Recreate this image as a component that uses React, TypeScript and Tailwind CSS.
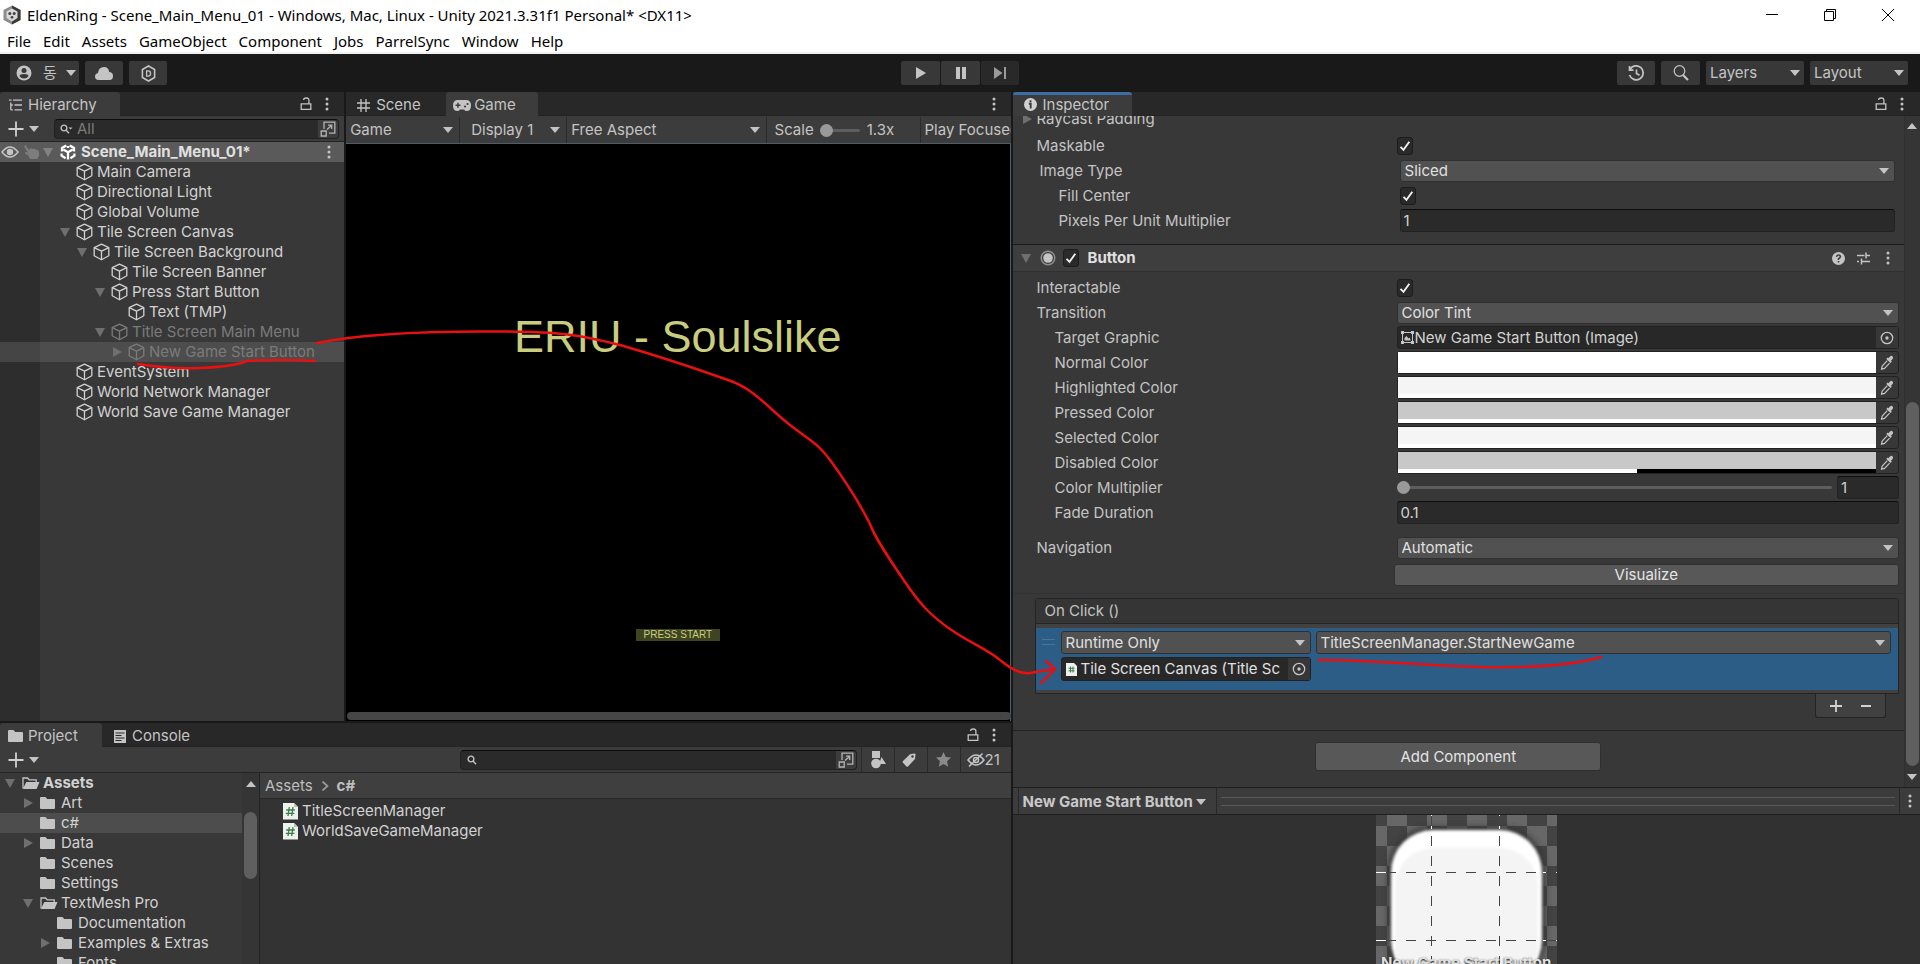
import { useId, type ReactNode } from "react";

/* ---------- icons ---------- */

function Caret({ className = "" }: { className?: string }) {
  return (
    <svg viewBox="0 0 10 6" className={`h-[6px] w-[10px] shrink-0 fill-[#c4c4c4] ${className}`}>
      <path d="M0 0h10L5 6z" />
    </svg>
  );
}

function Fold({ open, className = "fill-[#6f6f6f]" }: { open: boolean; className?: string }) {
  return (
    <svg viewBox="0 0 12 12" className={`h-3 w-3 shrink-0 ${className}`}>
      {open ? <path d="M1 2h10L6 11z" /> : <path d="M2 1v10l9-5z" />}
    </svg>
  );
}

function Cube() {
  return (
    <svg viewBox="0 0 17 18" className="h-[18px] w-[17px] shrink-0 fill-none stroke-current" strokeWidth="1.3" strokeLinejoin="round">
      <path d="M8.5 1.2 15.8 4.6 15.8 12.8 8.5 16.8 1.2 12.8 1.2 4.6z" />
      <path d="M1.2 4.6 8.5 8.2 15.8 4.6M8.5 8.2V16.8" />
    </svg>
  );
}

function Dots() {
  return (
    <svg viewBox="0 0 4 14" className="h-[14px] w-1 fill-[#c4c4c4]">
      <circle cx="2" cy="2" r="1.5" />
      <circle cx="2" cy="7" r="1.5" />
      <circle cx="2" cy="12" r="1.5" />
    </svg>
  );
}

function Lock() {
  return (
    <svg viewBox="0 0 12 14" className="h-[14px] w-3 fill-none stroke-[#c4c4c4]" strokeWidth="1.3">
      <path d="M1.2 6.8h9.6v5.6H1.2zM8.9 6.8V3.4c0-1.8-1-2.4-2.6-2.4S3.6 1.4 3.6 3" />
    </svg>
  );
}

function Plus() {
  return (
    <svg viewBox="0 0 16 16" className="h-4 w-4 fill-none stroke-[#d0d0d0]" strokeWidth="1.8">
      <path d="M8 .5v15M.5 8h15" />
    </svg>
  );
}

function Lens({ caret = false }: { caret?: boolean }) {
  return (
    <svg viewBox="0 0 13 10" className="h-[10px] w-[13px] shrink-0 fill-none stroke-[#c4c4c4]" strokeWidth="1.4">
      <circle cx="4" cy="4" r="2.9" />
      <path d="M6.2 6.2 9 9.2" />
      {caret && <path d="M8.5 3.5h4L10.5 5.6z" className="fill-[#c4c4c4] stroke-none" />}
    </svg>
  );
}

function Expand() {
  return (
    <svg viewBox="0 0 16 16" className="h-4 w-4 fill-none stroke-[#b4b4b4]" strokeWidth="1.3">
      <path d="M4 8V1.2h10.8v11H9" />
      <path d="M1.2 10h5v5h-5zM7 8.5 11.5 4.4M8 4.2h3.7v3.7" />
    </svg>
  );
}

function Folder() {
  return (
    <svg viewBox="0 0 15 12" className="h-3 w-[15px] shrink-0 fill-[#c4c4c4]">
      <path d="M0 1Q0 0 1 0h4.5l1.7 2H14q1 0 1 1v8q0 1-1 1H1q-1 0-1-1z" />
    </svg>
  );
}

function OpenFolder() {
  return (
    <svg viewBox="0 0 18 12" className="h-3 w-[18px] shrink-0 fill-[#c4c4c4]">
      <path d="M1 11.5V1h4.5l1.7 1.8h7V5" className="fill-none stroke-[#c4c4c4]" strokeWidth="1.3" />
      <path d="M4.3 5H17.5L14.6 12H.8z" />
    </svg>
  );
}

function ScriptIcon() {
  return (
    <svg viewBox="0 0 15 18" className="h-[18px] w-[15px] shrink-0">
      <path d="M0 1h11l4 4v12.5H0z" fill="#eef2ee" />
      <path d="M11 1v4h4z" fill="#b9c4b9" />
      <path d="M6.3 5.2 5 14M10 5.2 8.7 14M3.2 8h8.6M2.8 11.3h8.6" stroke="#3c7d45" strokeWidth="1.3" fill="none" />
    </svg>
  );
}

function Target() {
  return (
    <svg viewBox="0 0 14 14" className="h-[14px] w-[14px]">
      <circle cx="7" cy="7" r="5.7" fill="none" stroke="#c4c4c4" strokeWidth="1.3" />
      <circle cx="7" cy="7" r="1.7" fill="#c4c4c4" />
    </svg>
  );
}

function Dropper() {
  return (
    <svg viewBox="0 0 14 16" className="h-4 w-[14px]">
      <path d="M8.3 3.2 10 1.4q1.5-1.2 2.6 0t0 2.7L11 5.800l.8 1-1.300 1.300-4.200-4.200 1.300-1.300z" fill="#c4c4c4" />
      <path d="M7.3 5.6 2.2 11l-.7 3.2 3-.8 5.1-5.3" fill="none" stroke="#c4c4c4" strokeWidth="1.2" />
    </svg>
  );
}

function UnityMark() {
  return (
    <svg viewBox="0 0 16 16" className="h-4 w-4 shrink-0 fill-none stroke-white" strokeWidth="2.3">
      <path d="M6.3 1.400 2 4v3.500M9.700 1.400 14 4v3.500M1.600 9.500v2.200l4 2.500M14.400 9.500v2.200l-4 2.500" />
      <path d="M8 15.500V8.200M8 8.200 3.300 5.600M8 8.200l4.700-2.600M8 2v2" />
    </svg>
  );
}

/* ---------- controls ---------- */

function IconButton({ label, children, className = "" }: { label: string; children: ReactNode; className?: string }) {
  return (
    <button type="button" aria-label={label} className={`flex shrink-0 items-center justify-center ${className}`}>
      {children}
    </button>
  );
}

function Dropdown({
  value,
  label,
  id,
  box = "",
  tone = "rounded-[3px] border border-[#303030] bg-[#515151] text-[#e0e0e0]",
  pad = "pl-1 pr-5",
  caret = "mr-[6px]",
}: {
  value: string;
  label?: string;
  id?: string;
  box?: string;
  tone?: string;
  pad?: string;
  caret?: string;
}) {
  return (
    <div className={`grid items-center ${box}`}>
      <select
        id={id}
        aria-label={label}
        defaultValue={value}
        className={`col-start-1 row-start-1 h-full w-full min-w-0 appearance-none outline-none ${pad} ${tone}`}
      >
        <option>{value}</option>
      </select>
      <Caret className={`pointer-events-none col-start-1 row-start-1 justify-self-end ${caret}`} />
    </div>
  );
}

function Tick({ id, label }: { id?: string; label?: string }) {
  return (
    <span className="grid h-[18px] w-4 shrink-0 place-items-center">
      <input
        id={id}
        aria-label={label}
        type="checkbox"
        defaultChecked
        className="peer col-start-1 row-start-1 h-[18px] w-4 appearance-none rounded-[3px] border border-[#1c1c1c] bg-[#2a2a2a]"
      />
      <svg viewBox="0 0 12 12" className="pointer-events-none invisible col-start-1 row-start-1 h-3 w-3 fill-none stroke-[#f0f0f0] peer-checked:visible" strokeWidth="1.9">
        <path d="M1.5 6.8 4.5 9.8 10.3 1.8" />
      </svg>
    </span>
  );
}

const RANGE =
  "h-3 min-w-0 appearance-none bg-transparent outline-none [&::-webkit-slider-runnable-track]:h-[3px] [&::-webkit-slider-runnable-track]:rounded-full [&::-webkit-slider-runnable-track]:bg-[#5e5e5e] [&::-webkit-slider-thumb]:-mt-[5px] [&::-webkit-slider-thumb]:h-[13px] [&::-webkit-slider-thumb]:w-[13px] [&::-webkit-slider-thumb]:appearance-none [&::-webkit-slider-thumb]:rounded-full [&::-webkit-slider-thumb]:bg-[#999999]";

const FIELD = "h-[23px] rounded-[3px] border border-[#212121] border-t-[#0d0d0d] bg-[#2a2a2a] px-[3px] text-[#d2d2d2] outline-none";

function Row({ label, indent, children }: { label: string; indent: string; children: (id: string) => ReactNode }) {
  const id = useId();
  return (
    <div className="flex h-[25px] items-center">
      <label htmlFor={id} className={`w-[384px] shrink-0 ${indent}`}>
        {label}
      </label>
      {children(id)}
    </div>
  );
}

function ColorRow({ label, color, half = false }: { label: string; color: string; half?: boolean }) {
  return (
    <Row label={label} indent="pl-[42px]">
      {(id) => (
        <div className="mr-[5px] flex h-[23px] flex-1 rounded-[3px] border border-[#212121]">
          <button id={id} type="button" className={`flex flex-1 flex-col justify-end ${color}`}>
            <span className={`block h-1 w-full ${half ? "bg-linear-to-r from-white from-50% to-black to-50%" : "bg-white"}`} />
          </button>
          <IconButton label={`Pick ${label}`} className="w-[22px]">
            <Dropper />
          </IconButton>
        </div>
      )}
    </Row>
  );
}

function Tab({ active = false, accent = false, icon, children, box }: { active?: boolean; accent?: boolean; icon: ReactNode; children: ReactNode; box: string }) {
  return (
    <button
      type="button"
      role="tab"
      aria-selected={active}
      className={`flex h-6 shrink-0 items-center rounded-t-[3px] ${active ? "bg-[#3c3c3c]" : ""} ${accent ? "border-t-[3px] border-[#3a6ea5] pb-px" : "pt-[3px]"} ${box}`}
    >
      {icon}
      {children}
    </button>
  );
}

/* ---------- top bars ---------- */

const MENUS = ["File", "Edit", "Assets", "GameObject", "Component", "Jobs", "ParrelSync", "Window", "Help"];

function TitleBar() {
  return (
    <header className="shrink-0 border-b-2 border-[#f0f0f0] bg-white font-['Noto_Sans','Noto_Sans_CJK_KR',sans-serif] text-[15px] text-black">
      <div className="flex h-[30px] items-center">
        <svg viewBox="0 0 18 20" className="ml-[3px] h-5 w-[18px] shrink-0">
          <path d="M9 .5 17.5 5v10L9 19.5.5 15V5z" fill="#8d8d8d" />
          <path d="M9 .5 17.5 5v10L9 19.5z" fill="#3a3a3a" />
          <path d="M9 3.5 14.5 6.5v6.5L9 16.5 3.5 13V6.5z" fill="#d8d8d8" />
          <circle cx="6.8" cy="8.5" r="1.5" fill="#444" />
          <circle cx="11.2" cy="8.5" r="1.5" fill="#444" />
          <circle cx="9" cy="12.3" r="1.4" fill="#444" />
        </svg>
        <h1 className="ml-[6px] flex-1 whitespace-pre">EldenRing - Scene_Main_Menu_01 - Windows, Mac, Linux - Unity 2021.3.31f1 Personal* &lt;DX11&gt;</h1>
        <IconButton label="Minimize" className="h-full w-[58px]">
          <svg viewBox="0 0 12 12" className="h-3 w-3 stroke-black"><path d="M0 5.5h12" /></svg>
        </IconButton>
        <IconButton label="Restore" className="h-full w-[58px]">
          <svg viewBox="0 0 12 12" className="h-3 w-3 fill-none stroke-black"><path d="M.5 2.5h9v9h-9zM2.5 2.5v-2h9v9h-2" /></svg>
        </IconButton>
        <IconButton label="Close" className="mr-[3px] h-full w-[58px]">
          <svg viewBox="0 0 12 12" className="h-3 w-3 stroke-black"><path d="M0 0l12 12M12 0L0 12" /></svg>
        </IconButton>
      </div>
      <nav className="flex h-[22px] items-center gap-3 pl-[7px]">
        {MENUS.map((m) => (
          <button key={m} type="button">{m}</button>
        ))}
      </nav>
    </header>
  );
}

const TOOL = "h-6 rounded-[2px] bg-[#383838]";

function Toolbar() {
  return (
    <div className="grid h-[38px] shrink-0 grid-cols-[1fr_auto_1fr] items-center bg-[#191919]">
      <div className="flex items-center gap-[6px] pl-[10px]">
        <button type="button" className={`flex w-[69px] items-center pl-[6px] ${TOOL}`}>
          <svg viewBox="0 0 16 16" className="h-4 w-4">
            <circle cx="8" cy="8" r="7.5" fill="#c4c4c4" />
            <circle cx="8" cy="5.5" r="2.5" fill="#383838" />
            <path d="M3.5 11q0-2 4.5-2t4.5 2q-1.500 2.500-4.500 2.500T3.500 11z" fill="#383838" />
          </svg>
          <span className="ml-[11px] text-[#c4c4c4]">동</span>
          <Caret className="ml-[9px]" />
        </button>
        <IconButton label="Cloud" className={`w-[38px] ${TOOL}`}>
          <svg viewBox="0 0 18 13" className="h-[13px] w-[18px] fill-[#c4c4c4]">
            <path d="M4 13Q0 13 0 9.500 0 6.500 3 6 3.500 0 9 0q4.500 0 5.200 5Q18 5.300 18 9q0 4-3.500 4z" />
          </svg>
        </IconButton>
        <IconButton label="Package" className={`w-[38px] ${TOOL}`}>
          <svg viewBox="0 0 16 18" className="h-[17px] w-[15px] fill-none stroke-[#c4c4c4]" strokeWidth="1.7">
            <path d="M8 1 14.5 4.7v8.6L8 17 1.5 13.3V4.7z" />
            <path d="M6 6.200h1.600q2.600 0 2.600 2.800t-2.600 2.800H6z" strokeWidth="1.4" />
          </svg>
        </IconButton>
      </div>
      <div className="flex gap-px">
        <IconButton label="Play" className={`w-[39px] ${TOOL}`}>
          <svg viewBox="0 0 10 12" className="h-3 w-[10px] fill-[#c4c4c4]"><path d="M0 0v12L10 6z" /></svg>
        </IconButton>
        <IconButton label="Pause" className={`w-[39px] ${TOOL}`}>
          <svg viewBox="0 0 10 12" className="h-3 w-[10px] fill-[#c4c4c4]"><path d="M0 0h4v12H0zM6 0h4v12H6z" /></svg>
        </IconButton>
        <IconButton label="Step" className="h-6 w-[38px] rounded-[2px] bg-[#292929]">
          <svg viewBox="0 0 12 12" className="h-3 w-3 fill-[#9a9a9a]"><path d="M0 0v12L8.5 6zM10 0h2v12h-2z" /></svg>
        </IconButton>
      </div>
      <div className="flex items-center justify-end gap-[6px] pr-3 text-[#c4c4c4]">
        <IconButton label="History" className={`w-[38px] ${TOOL}`}>
          <svg viewBox="0 0 16 16" className="h-4 w-4 fill-none stroke-[#c4c4c4]" strokeWidth="1.7">
            <path d="M2 4.5A7 7 0 1 1 1.5 10M1.5 1v4.2h4M8.5 4.5V8.5l3 1.8" />
          </svg>
        </IconButton>
        <IconButton label="Search" className={`w-[39px] ${TOOL}`}>
          <svg viewBox="0 0 16 16" className="h-4 w-4 fill-none stroke-[#c4c4c4]">
            <circle cx="6.5" cy="6" r="5.3" strokeWidth="1.2" />
            <path d="M10 10l5 5" strokeWidth="2.2" />
          </svg>
        </IconButton>
        <Dropdown label="Layers" value="Layers" box="h-6 w-[98px]" tone="rounded-[2px] bg-[#383838] text-[#c4c4c4]" caret="mr-1" />
        <Dropdown label="Layout" value="Layout" box="h-6 w-[98px]" tone="rounded-[2px] bg-[#383838] text-[#c4c4c4]" caret="mr-1" />
      </div>
    </div>
  );
}

/* ---------- hierarchy ---------- */

const LEVEL = ["pl-[59px]", "pl-[76px]", "pl-[94px]", "pl-[111px]"];

const NODES: { name: string; level: number; fold?: "open" | "closed"; dim?: boolean; selected?: boolean }[] = [
  { name: "Main Camera", level: 0 },
  { name: "Directional Light", level: 0 },
  { name: "Global Volume", level: 0 },
  { name: "Tile Screen Canvas", level: 0, fold: "open" },
  { name: "Tile Screen Background", level: 1, fold: "open" },
  { name: "Tile Screen Banner", level: 2 },
  { name: "Press Start Button", level: 2, fold: "open" },
  { name: "Text (TMP)", level: 3 },
  { name: "Title Screen Main Menu", level: 2, fold: "open", dim: true },
  { name: "New Game Start Button", level: 3, fold: "closed", dim: true, selected: true },
  { name: "EventSystem", level: 0 },
  { name: "World Network Manager", level: 0 },
  { name: "World Save Game Manager", level: 0 },
];

function Hierarchy() {
  return (
    <section className="flex min-h-0 min-w-0 flex-col bg-[linear-gradient(90deg,#2d2d2d_40px,#383838_40px)]">
      <div className="flex h-6 shrink-0 items-center border-b border-[#232323] bg-[#282828]">
        <Tab
          active
          box="w-[120px] pl-[9px]"
          icon={
            <svg viewBox="0 0 13 12" className="mr-[6px] h-3 w-[13px] fill-none stroke-[#c4c4c4]" strokeWidth="1.3">
              <path d="M0 1.2h2.5M4 1.2h9M5.500 6H13M5.500 10.800H13M1.800 3.500V11M1.800 6h2M1.800 10.800h2" />
            </svg>
          }
        >
          Hierarchy
        </Tab>
        <div className="ml-auto flex items-center gap-[13px] pr-[15px]">
          <IconButton label="Lock hierarchy"><Lock /></IconButton>
          <IconButton label="Hierarchy menu"><Dots /></IconButton>
        </div>
      </div>
      <div className="flex h-[26px] shrink-0 items-center border-b border-[#232323] bg-[#3c3c3c] pl-2 pr-[5px]">
        <button type="button" aria-label="Create" className="flex items-center gap-[5px]">
          <Plus />
          <Caret />
        </button>
        <div className="ml-[15px] flex h-5 flex-1 items-center rounded-[4px] border border-[#212121] border-t-[#0d0d0d] bg-[#2a2a2a] pl-[5px]">
          <Lens caret />
          <input aria-label="Search hierarchy" placeholder="All" className="ml-1 min-w-0 flex-1 bg-transparent outline-none placeholder:text-[#7b7b7b]" />
          <IconButton label="Open search window" className="h-full w-5 rounded-r-[3px] bg-[#3c3c3c]"><Expand /></IconButton>
        </div>
      </div>
      <div className="flex h-5 shrink-0 items-center bg-[#5a5a5a] font-bold text-[#e0e0e0]">
        <svg viewBox="0 0 18 12" className="ml-px h-3 w-[18px] shrink-0">
          <path d="M1 6Q9-4 17 6 9 16 1 6z" fill="none" stroke="#c4c4c4" strokeWidth="1.5" />
          <circle cx="9" cy="6" r="3.2" fill="#c4c4c4" />
        </svg>
        <svg viewBox="0 0 15 14" className="ml-[5px] h-[14px] w-[15px] shrink-0 fill-[#7d7d7d]">
          <path d="M0 1.500 1.500 0 5.500 5.500V4q2-1.500 3 0 2-1 3 .5 3 0 3.500 3V11L13 14H7Q5 13 4.500 10.500L1 8.500V7l3 .5z" />
        </svg>
        <span className="ml-[3px] mr-[6px] flex"><Fold open className="fill-[#818181]" /></span>
        <UnityMark />
        <span className="ml-[5px] flex-1">Scene_Main_Menu_01*</span>
        <IconButton label="Scene menu" className="mr-[13px]"><Dots /></IconButton>
      </div>
      <ul className="min-h-0 flex-1 overflow-hidden">
        {NODES.map((n) => (
          <li
            key={n.name}
            className={`flex h-5 items-center ${LEVEL[n.level]} ${n.selected ? "bg-[linear-gradient(90deg,#454545_40px,#4d4d4d_40px)]" : ""} ${n.dim ? "text-[#7b7b7b]" : "text-[#d2d2d2]"}`}
          >
            <span className="mr-[5px] flex w-3">{n.fold && <Fold open={n.fold === "open"} />}</span>
            <Cube />
            <span className="ml-1 whitespace-nowrap">{n.name}</span>
          </li>
        ))}
      </ul>
    </section>
  );
}

/* ---------- game view ---------- */

const BAR_SELECT = "bg-transparent text-[#c4c4c4]";

function GameView() {
  return (
    <section className="flex min-h-0 min-w-0 flex-col bg-black">
      <div className="flex h-6 shrink-0 items-center border-b border-[#232323] bg-[#282828]">
        <Tab
          box="w-[100px] pl-[11px]"
          icon={
            <svg viewBox="0 0 13 13" className="mr-[6px] h-[13px] w-[13px] fill-none stroke-[#c4c4c4]" strokeWidth="1.3">
              <path d="M4 0v13M9 0v13M0 4h13M0 9h13" />
            </svg>
          }
        >
          Scene
        </Tab>
        <Tab
          active
          box="w-[92px] pl-[7px]"
          icon={
            <svg viewBox="0 0 18 11" className="mr-[3px] h-[11px] w-[18px]">
              <path d="M5 0h8q5 0 5 5.500T13.500 11q-1.500 0-2.500-1.500H7Q6 11 4.500 11 0 11 0 5.500T5 0z" fill="#c4c4c4" />
              <path d="M5 2.8v5M2.5 5.3h5" stroke="#3c3c3c" strokeWidth="1.5" />
              <circle cx="12" cy="6.5" r="1.1" fill="#3c3c3c" />
              <circle cx="14.5" cy="4" r="1.1" fill="#3c3c3c" />
            </svg>
          }
        >
          Game
        </Tab>
        <IconButton label="Game view menu" className="ml-auto mr-[15px]"><Dots /></IconButton>
      </div>
      <div className="flex h-[27px] shrink-0 items-stretch divide-x divide-[#2a2a2a] overflow-hidden bg-[#3c3c3c] pt-px text-[#c4c4c4]">
        <Dropdown label="View" value="Game" box="w-[114px] shrink-0" tone={BAR_SELECT} />
        <Dropdown label="Display" value="Display 1" box="w-[107px] shrink-0" tone={BAR_SELECT} pad="pl-[11px]" />
        <Dropdown label="Aspect" value="Free Aspect" box="min-w-[120px] flex-1" tone={BAR_SELECT} />
        <label className="flex w-[154px] shrink-0 items-center pl-2">
          Scale
          <input type="range" min="0" max="10" defaultValue="0" className={`ml-[6px] w-10 ${RANGE}`} />
          <span className="ml-[7px]">1.3x</span>
        </label>
        <Dropdown label="Play mode" value="Play Focused" box="w-[90px] shrink-0 overflow-hidden [&>svg]:hidden" tone={BAR_SELECT} pad="pl-1" />
      </div>
      <div className="flex min-h-0 flex-1 flex-col items-center border-r border-t border-[#4f5d68] font-['Liberation_Sans',Arial,sans-serif] text-[#c9cd80]">
        <p className="mt-[167px] text-[45px] leading-[52px]">ERIU - Soulslike</p>
        <div className="flex-1" />
        <button type="button" className="mb-[71px] flex h-3 items-center bg-[#3f4420] px-2 text-[10px] leading-3">PRESS START</button>
        <div className="mb-px ml-[2px] h-[8px] w-full shrink-0 rounded-full bg-[#464646]" />
      </div>
    </section>
  );
}

/* ---------- project ---------- */

const FOLDERS: { name: string; level: number; fold?: "open" | "closed"; selected?: boolean; bold?: boolean }[] = [
  { name: "Assets", level: 0, fold: "open", bold: true },
  { name: "Art", level: 1, fold: "closed" },
  { name: "c#", level: 1, selected: true },
  { name: "Data", level: 1, fold: "closed" },
  { name: "Scenes", level: 1 },
  { name: "Settings", level: 1 },
  { name: "TextMesh Pro", level: 1, fold: "open" },
  { name: "Documentation", level: 2 },
  { name: "Examples & Extras", level: 2, fold: "closed" },
  { name: "Fonts", level: 2 },
];

const FOLDER_LEVEL = ["pl-1", "pl-[22px]", "pl-[39px]"];

function Project() {
  return (
    <section className="col-span-2 flex min-h-0 min-w-0 flex-col bg-[#333333]">
      <div className="flex h-6 shrink-0 items-center border-b border-[#232323] bg-[#282828]">
        <Tab active box="w-[102px] pl-2" icon={<span className="mr-[5px]"><Folder /></span>}>Project</Tab>
        <Tab
          box="w-[120px] pl-3"
          icon={
            <svg viewBox="0 0 12 13" className="mr-[6px] h-[13px] w-3">
              <path d="M0 0h12v13H0z" fill="#c4c4c4" />
              <path d="M1.5 3h9M1.5 5.5h6M1.5 8h9M1.5 10.5h6" stroke="#282828" strokeWidth="1.1" />
            </svg>
          }
        >
          Console
        </Tab>
        <div className="ml-auto flex items-center gap-[13px] pr-[15px]">
          <IconButton label="Lock project"><Lock /></IconButton>
          <IconButton label="Project menu"><Dots /></IconButton>
        </div>
      </div>
      <div className="flex h-[26px] shrink-0 items-center border-b border-[#232323] bg-[#3c3c3c] pl-2">
        <button type="button" aria-label="Create asset" className="flex items-center gap-[5px]">
          <Plus />
          <Caret />
        </button>
        <div className="ml-auto mr-1 flex h-5 w-[397px] items-center rounded-[4px] border border-[#212121] border-t-[#0d0d0d] bg-[#2a2a2a] pl-[6px]">
          <Lens />
          <input aria-label="Search project" className="min-w-0 flex-1 bg-transparent outline-none" />
          <IconButton label="Open search" className="h-full w-5 rounded-r-[3px] bg-[#3c3c3c]"><Expand /></IconButton>
        </div>
        <div className="flex h-full divide-x divide-[#2a2a2a] border-l border-[#2a2a2a]">
          <IconButton label="Search by type" className="w-[33px]">
            <svg viewBox="0 0 16 18" className="h-[18px] w-4 fill-[#c4c4c4]">
              <path d="M2 0h8v7H2zM11.5 6 16 13H9z" />
              <circle cx="6" cy="12.5" r="4.8" />
            </svg>
          </IconButton>
          <IconButton label="Search by label" className="w-[33px] pr-1">
            <svg viewBox="0 0 14 14" className="h-[14px] w-[14px]">
              <path d="M8 1.200 12.500.5q1 0 1 1L13 6 6 13.500Q5 14 4.200 13.300L.8 9.500Q.3 8.800 1 8z" fill="#c4c4c4" />
              <circle cx="10.5" cy="3.5" r="1.2" fill="#3c3c3c" />
            </svg>
          </IconButton>
          <IconButton label="Save search" className="w-[33px]">
            <svg viewBox="0 0 16 16" className="h-[15px] w-[15px] fill-[#8a8a8a]">
              <path d="M8 0l2.4 5.3 5.6.6-4.2 3.9L13 15.6 8 12.7 3 15.6l1.2-5.8L0 5.9l5.6-.6z" />
            </svg>
          </IconButton>
          <button type="button" aria-label="Hidden packages" className="flex w-[50px] items-center pl-[6px] text-[#c4c4c4]">
            <svg viewBox="0 0 18 16" className="h-4 w-[18px] shrink-0 fill-none stroke-[#c4c4c4]" strokeWidth="1.5">
              <path d="M1 8Q9-2 17 8 9 18 1 8z" />
              <circle cx="9" cy="8" r="2.5" />
              <path d="M2 14.5 15.5 1.5" />
            </svg>
            21
          </button>
        </div>
      </div>
      <div className="flex min-h-0 flex-1 text-[#d2d2d2]">
        <div className="flex w-[260px] shrink-0 border-r border-[#232323] bg-[#383838]">
          <ul className="min-w-0 flex-1 overflow-hidden">
            {FOLDERS.map((f) => (
              <li key={f.name} className={`flex h-5 items-center ${FOLDER_LEVEL[f.level]} ${f.selected ? "bg-[#4d4d4d]" : ""} ${f.bold ? "font-bold" : ""}`}>
                <span className="mr-[6px] flex w-3">{f.fold && <Fold open={f.fold === "open"} />}</span>
                {f.fold === "open" ? <OpenFolder /> : <Folder />}
                <span className={`whitespace-nowrap ${f.fold === "open" ? "ml-[3px]" : "ml-[6px]"}`}>{f.name}</span>
              </li>
            ))}
          </ul>
          <div className="flex w-[17px] flex-col items-center bg-[#353535]">
            <Caret className="mt-[8px] rotate-180" />
            <div className="mt-[25px] h-[67px] w-[13px] rounded-full bg-[#5f5f5f]" />
          </div>
        </div>
        <div className="min-w-0 flex-1">
          <div className="flex h-[26px] items-center border-b border-[#282828] bg-[#3f3f3f] pl-[5px] text-[#bdbdbd]">
            Assets
            <svg viewBox="0 0 8 10" className="mx-2 h-[10px] w-2 fill-none stroke-[#9a9a9a]" strokeWidth="1.7"><path d="M1.5.5 6.5 5l-5 4.5" /></svg>
            <span className="font-bold">c#</span>
          </div>
          <ul className="pl-[23px] pt-[2px]">
            {["TitleScreenManager", "WorldSaveGameManager"].map((s) => (
              <li key={s} className="flex h-5 items-center gap-1">
                <ScriptIcon />
                {s}
              </li>
            ))}
          </ul>
        </div>
      </div>
    </section>
  );
}

/* ---------- inspector ---------- */

function Sprite() {
  const cells: ReactNode[] = [];
  for (let r = 0; r < 9; r++) {
    for (let c = 0; c < 10; c++) {
      if ((r + c) % 2 === 1) cells.push(<rect key={`${r}-${c}`} x={c * 20 - 9} y={r * 20 - 9} width="20" height="20" fill="#676767" />);
    }
  }
  return (
    <svg viewBox="0 0 181 160" className="h-[160px] w-[181px]">
      <defs>
        <filter id="soft" x="-20%" y="-20%" width="140%" height="140%"><feGaussianBlur stdDeviation="1.5" /></filter>
        <filter id="glow" x="-20%" y="-20%" width="140%" height="140%"><feGaussianBlur stdDeviation="3" /></filter>
      </defs>
      <rect width="181" height="160" fill="#434343" />
      {cells}
      <rect x="12" y="12" width="157" height="155" rx="44" fill="#333333" filter="url(#glow)" />
      <rect x="15" y="15" width="151" height="152" rx="42" fill="#ffffff" filter="url(#soft)" />
      <rect x="19" y="33" width="143" height="140" rx="38" fill="#f4f4f4" filter="url(#soft)" />
      <g stroke="#ffffff"><path d="M55.5 0v14M123.5 0v14M0 57.5h14M167 57.5h14M0 125.5h14M167 125.5h14" /></g>
      <g stroke="#444444" strokeDasharray="10 10">
        <path d="M55.5 1v160M123.5 1v160M10 57.5h171M10 125.5h171" />
      </g>
    </svg>
  );
}

function Inspector() {
  return (
    <section className="row-span-2 flex min-h-0 min-w-0 flex-col bg-[#383838] text-[#c4c4c4]">
      <div className="flex h-6 shrink-0 items-center border-b border-[#232323] bg-[#282828]">
        <Tab
          active
          accent
          box="w-[119px] pl-[11px]"
          icon={
            <svg viewBox="0 0 13 13" className="mr-[6px] h-[13px] w-[13px]">
              <circle cx="6.5" cy="6.5" r="6.5" fill="#d2d2d2" />
              <path d="M6.5 2.2v2M4.8 5.7h1.9v4.8" stroke="#3c3c3c" strokeWidth="1.9" fill="none" />
            </svg>
          }
        >
          Inspector
        </Tab>
        <div className="ml-auto flex items-center gap-[13px] pr-4">
          <IconButton label="Lock inspector"><Lock /></IconButton>
          <IconButton label="Inspector menu"><Dots /></IconButton>
        </div>
      </div>

      <div className="flex min-h-0 flex-1">
        <div className="min-w-0 flex-1 overflow-hidden">
          <div className="-mt-2 pb-[11px]">
            <div className="flex h-[25px] items-center pb-1 pl-2">
              <Fold open={false} />
              <span className="ml-1">Raycast Padding</span>
            </div>
            <Row label="Maskable" indent="pl-6">{(id) => <Tick id={id} />}</Row>
            <Row label="Image Type" indent="pl-[27px]">
              {(id) => <Dropdown id={id} value="Sliced" box="ml-[3px] mr-[9px] h-[22px] flex-1" />}
            </Row>
            <Row label="Fill Center" indent="pl-[46px]">{(id) => <span className="ml-[3px] flex"><Tick id={id} /></span>}</Row>
            <Row label="Pixels Per Unit Multiplier" indent="pl-[46px]">
              {(id) => <input id={id} defaultValue="1" className={`ml-[3px] mr-[9px] min-w-0 flex-1 ${FIELD}`} />}
            </Row>
          </div>

          <div className="flex h-7 items-center border-y border-t-[#1a1a1a] border-b-[#303030] bg-[#3e3e3e] pl-[7px] pr-[14px] text-[#e0e0e0]">
            <Fold open />
            <svg viewBox="0 0 16 16" className="ml-2 h-4 w-4">
              <circle cx="8" cy="8" r="6.8" fill="none" stroke="#8f8f8f" strokeWidth="1.4" />
              <circle cx="8" cy="8" r="4.8" fill="#c4c4c4" />
            </svg>
            <label className="flex items-center gap-[9px] pl-[7px] font-bold">
              <Tick />
              Button
            </label>
            <div className="ml-auto flex items-center gap-3">
              <IconButton label="Help">
                <svg viewBox="0 0 13 13" className="h-[13px] w-[13px]">
                  <circle cx="6.5" cy="6.5" r="6.5" fill="#c4c4c4" />
                  <path d="M4.500 4.800q.2-1.800 2-1.800t2 1.600Q8.500 5.600 6.500 6.700V8M6.500 9v1.500" stroke="#3e3e3e" strokeWidth="1.6" fill="none" />
                </svg>
              </IconButton>
              <IconButton label="Presets">
                <svg viewBox="0 0 13 13" className="h-[13px] w-[13px] fill-none stroke-[#c4c4c4]" strokeWidth="1.5">
                  <path d="M0 3.5h7.500M9 .5v6M9 3.500h4M0 9.500h2M4.500 6.500v6M5 9.500h8" />
                </svg>
              </IconButton>
              <IconButton label="Component menu" className="pl-1"><Dots /></IconButton>
            </div>
          </div>

          <div className="pt-[3px]">
            <Row label="Interactable" indent="pl-6">{(id) => <Tick id={id} />}</Row>
            <Row label="Transition" indent="pl-6">{(id) => <Dropdown id={id} value="Color Tint" box="mr-[5px] h-[22px] flex-1" />}</Row>
            <Row label="Target Graphic" indent="pl-[42px]">
              {(id) => (
                <button id={id} type="button" className="mr-[5px] flex h-[23px] flex-1 items-center rounded-[3px] border border-[#212121] bg-[#282828] pl-[2px] text-[#d2d2d2]">
                  <svg viewBox="0 0 15 13" className="h-[13px] w-[15px] shrink-0 fill-none stroke-[#c4c4c4]" strokeWidth="1">
                    <path d="M2.500 1.500h10v10h-10z" />
                    <path d="M1 0h3v3H1zM11 0h3v3h-3zM1 10h3v3H1zM11 10h3v3h-3zM4.500 9.500V7l2-2 2 2.500 1.200-1 1 3z" className="fill-[#c4c4c4] stroke-none" />
                  </svg>
                  <span className="flex-1 text-left">New Game Start Button (Image)</span>
                  <span className="flex h-full w-[22px] items-center justify-center bg-[#373737]"><Target /></span>
                </button>
              )}
            </Row>
            <ColorRow label="Normal Color" color="bg-white" />
            <ColorRow label="Highlighted Color" color="bg-[#f5f5f5]" />
            <ColorRow label="Pressed Color" color="bg-[#c8c8c8]" />
            <ColorRow label="Selected Color" color="bg-[#f5f5f5]" />
            <ColorRow label="Disabled Color" color="bg-[#c8c8c8]" half />
            <Row label="Color Multiplier" indent="pl-[42px]">
              {(id) => (
                <>
                  <input id={id} type="range" min="1" max="5" defaultValue="1" className={`flex-1 ${RANGE}`} />
                  <input aria-label="Color multiplier value" defaultValue="1" className={`ml-[5px] mr-[5px] w-[62px] ${FIELD}`} />
                </>
              )}
            </Row>
            <Row label="Fade Duration" indent="pl-[42px]">
              {(id) => <input id={id} defaultValue="0.1" className={`mr-[5px] min-w-0 flex-1 ${FIELD}`} />}
            </Row>
            <div className="h-[10px]" />
            <Row label="Navigation" indent="pl-6">{(id) => <Dropdown id={id} value="Automatic" box="mr-[5px] h-[22px] flex-1" />}</Row>
            <div className="pb-[7px] pl-[381px] pr-[5px] pt-1">
              <button type="button" className="h-[22px] w-full rounded-[3px] border border-[#303030] bg-[#585858] leading-5 text-[#e4e4e4]">Visualize</button>
            </div>
          </div>

          <div className="border-t border-[#323232] pl-[22px] pr-[5px] pt-1">
            <div className="rounded-t-[3px] border border-[#242424] bg-[#414141]">
              <div className="flex h-[25px] items-center border-b border-[#242424] bg-[#353535] pl-[9px]">On Click ()</div>
              <div className="mb-[3px] mt-[4px] grid h-[62px] grid-cols-[25px_250px_1fr] content-start gap-y-[3px] bg-[#2c5d87] pr-[7px] pt-[3px] text-[#e0e0e0]">
                <svg viewBox="0 0 20 6" className="mt-[8px] h-[6px] w-5 stroke-[#4d7494]"><path d="M6 .5h13M6 5.500h13" /></svg>
                <Dropdown label="Call state" value="Runtime Only" box="h-[23px]" />
                <Dropdown label="Function" value="TitleScreenManager.StartNewGame" box="ml-[5px] h-[23px]" />
                <button type="button" className="col-start-2 flex h-6 items-center rounded-[3px] border border-[#212121] bg-[#282828] pl-1">
                  <svg viewBox="0 0 11 13" className="h-[13px] w-[11px] shrink-0">
                    <path d="M0 0h8l3 3v10H0z" fill="#eef2ee" />
                    <path d="M4.5 3.5v6M7 3.5v6M2.5 5.3h6M2.5 7.8h6" stroke="#3c7d45" />
                  </svg>
                  <span className="ml-1 min-w-0 flex-1 whitespace-nowrap text-left">Tile Screen Canvas (Title Sc</span>
                  <span className="flex h-full w-[22px] shrink-0 items-center justify-center bg-[#373737]"><Target /></span>
                </button>
              </div>
            </div>
            <div className="ml-auto mr-[13px] flex h-6 w-[71px] items-center justify-around rounded-b-[3px] border border-t-0 border-[#242424] bg-[#414141] px-1">
              <IconButton label="Add listener"><svg viewBox="0 0 12 12" className="h-3 w-3 stroke-[#d2d2d2]" strokeWidth="1.8"><path d="M6 0v12M0 6h12" /></svg></IconButton>
              <IconButton label="Remove listener"><svg viewBox="0 0 10 2" className="h-[2px] w-[10px] fill-[#d2d2d2]"><path d="M0 0h10v2H0z" /></svg></IconButton>
            </div>
          </div>

          <div className="mt-3 flex justify-center border-t border-[#232323] pt-[11px]">
            <button type="button" className="h-[29px] w-[286px] rounded-[3px] border border-[#303030] bg-[#585858] text-[#e4e4e4]">Add Component</button>
          </div>
        </div>

        <div className="flex w-4 shrink-0 flex-col items-center border-l border-[#303030] bg-[#353535]">
          <Caret className="mt-[7px] rotate-180" />
          <div className="mb-2 mt-auto h-[364px] w-[13px] rounded-full bg-[#5f5f5f]" />
          <Caret className="mb-[7px]" />
        </div>
      </div>

      <div className="flex h-[28px] shrink-0 items-center border-y border-[#1f1f1f] bg-[#3c3c3c]">
        <button type="button" className="ml-[5px] flex h-full w-[199px] items-center border-x border-[#282828] pl-1 pt-px font-bold text-[#c8c8c8]">
          <span className="whitespace-nowrap">New Game Start Button</span>
          <Caret className="ml-[3px]" />
        </button>
        <div className="mx-1 h-[9px] flex-1 border-y border-[#5a5a5a]" />
        <IconButton label="Preview menu" className="h-full w-[21px] border-l border-[#282828]"><Dots /></IconButton>
      </div>
      <div className="flex h-[149px] shrink-0 justify-center overflow-hidden bg-[#313131]">
        <figure className="relative h-full w-[181px]">
          <Sprite />
          <figcaption className="absolute inset-x-0 -bottom-[9px] whitespace-nowrap text-center font-bold leading-5 text-[#e0e0e0] [text-shadow:0_1px_2px_#000]">
            New Game Start Button
          </figcaption>
        </figure>
      </div>
    </section>
  );
}

/* ---------- hand-drawn notes over the editor ---------- */

function Annotations() {
  return (
    <svg viewBox="0 0 1920 964" preserveAspectRatio="none" className="pointer-events-none absolute inset-0 h-full w-full fill-none stroke-[#e81010]" strokeWidth="2.5" strokeLinecap="round" strokeLinejoin="round">
      <path d="M138 364Q168 369 200 368T247 361Q280 359 315 361" />
      <path d="M317 343C370 332 440 331 500 331.5S575 334 620 345C665 358 700 370 728 380C755 389 768 408 790 425S818 443 833 464S862 508 870 524C875 538 890 560 905 582S930 615 950 629S985 648 1000 660Q1018 675 1030 673T1055 669" />
      <path d="M1046 661 1055 669Q1050 675 1041 683" />
      <path d="M1319 660C1380 660 1430 666 1480 667S1575 665 1601 657" />
    </svg>
  );
}

export default function App() {
  return (
    <div className="relative flex h-screen flex-col overflow-hidden bg-[#191919] font-['Inter','Noto_Sans_CJK_KR',sans-serif] text-[15px] leading-5 text-[#c4c4c4]">
      <TitleBar />
      <Toolbar />
      <main className="grid min-h-0 flex-1 grid-cols-[344fr_664fr_907fr] grid-rows-[629fr_241fr] gap-x-[2px] gap-y-[2px]">
        <Hierarchy />
        <GameView />
        <Inspector />
        <Project />
      </main>
      <Annotations />
    </div>
  );
}
